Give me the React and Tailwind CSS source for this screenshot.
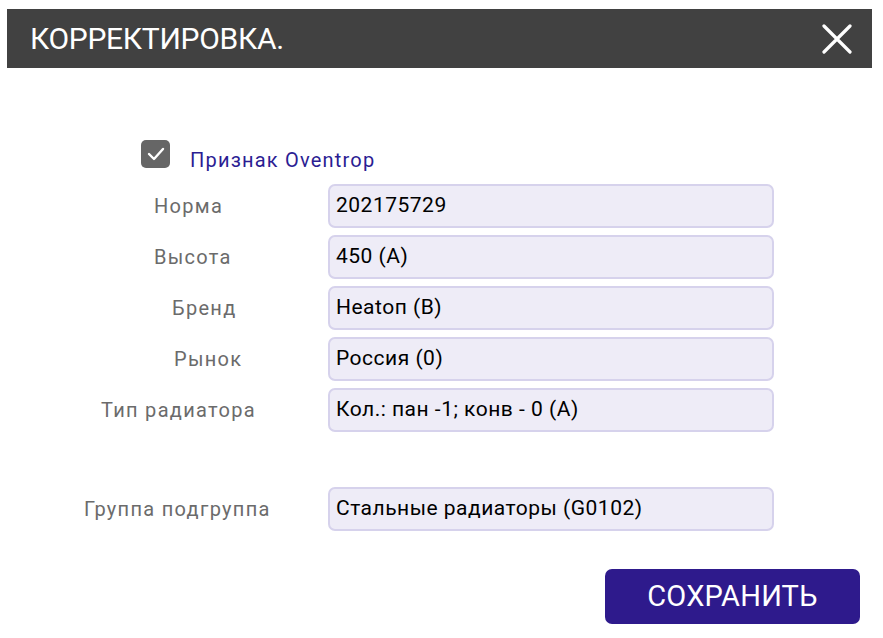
import React from 'react';

const rows = [
  { label: 'Норма', pad: 'pl-[154px]', value: '202175729' },
  { label: 'Высота', pad: 'pl-[154px]', value: '450 (A)' },
  { label: 'Бренд', pad: 'pl-[172px]', value: 'Heatoп (B)' },
  { label: 'Рынок', pad: 'pl-[174px]', value: 'Россия (0)' },
  { label: 'Тип радиатора', pad: 'pl-[101px]', value: 'Кол.: пан -1; конв - 0 (A)' },
];

const Row = ({ label, pad, value }) => (
  <div className="flex items-center">
    <div className={`w-[328px] ${pad} text-[20px] text-[#6b6b6b] tracking-[1.3px]`}>{label}</div>
    <div className="w-[446px] h-[44px] flex items-center px-[6px] bg-[#eeecf7] border-2 border-[#d6d2ec] rounded-[7px] text-[21px] text-black tracking-[0.5px]">
      {value}
    </div>
  </div>
);

const App = () => {
  return (
    <div className="min-h-screen bg-white font-['Roboto',sans-serif] pt-[9px]">
      <div className="ml-[7px] mr-[11px] h-[59px] bg-[#414141] flex items-center justify-between pl-[23px] pr-[20px]">
        <span className="text-white text-[30px] tracking-[-0.3px] leading-none">КОРРЕКТИРОВКА.</span>
        <svg width="30" height="30" viewBox="0 0 30 30" className="ml-auto">
          <path d="M2 2 L28 28 M28 2 L2 28" stroke="white" strokeWidth="3.2" strokeLinecap="round" />
        </svg>
      </div>

      <div className="flex items-start h-[28px] mt-[72px] pl-[141px]">
        <div className="w-[29px] h-[28px] rounded-[5px] bg-[#666666] flex items-center justify-center">
          <svg width="20" height="16" viewBox="0 0 20 16">
            <path d="M3 8 L8 13 L17 3" stroke="white" strokeWidth="2.4" fill="none" strokeLinecap="round" strokeLinejoin="round" />
          </svg>
        </div>
        <span className="ml-[20px] mt-[6px] leading-[28px] text-[20px] text-[#2b1d93] tracking-[1.2px] whitespace-nowrap">
          Признак Oventrop
        </span>
      </div>

      <div className="flex flex-col gap-[7px] mt-[16px]">
        {rows.map((r) => (
          <Row key={r.label} {...r} />
        ))}
      </div>

      <div className="mt-[55px]">
        <Row label="Группа подгруппа" pad="pl-[84px]" value="Стальные радиаторы (G0102)" />
      </div>

      <div className="flex justify-end mt-[38px] pr-[23px]">
        <button className="w-[255px] h-[55px] rounded-[7px] bg-[#2e1a8c] text-white text-[29px] tracking-[0.2px]">
          СОХРАНИТЬ
        </button>
      </div>
    </div>
  );
};

export default App;
